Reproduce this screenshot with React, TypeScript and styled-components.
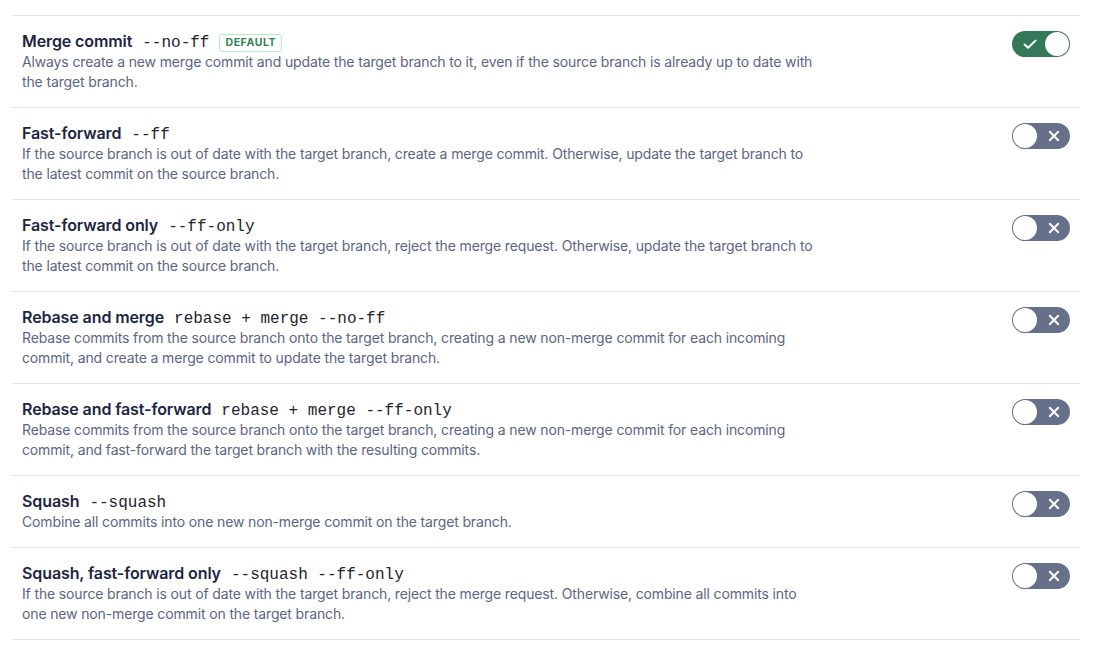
import React from "react";
import styled, { createGlobalStyle } from "styled-components";

const Global = createGlobalStyle`
  html, body { margin: 0; padding: 0; background: #ffffff; }
  body { font-family: Inter, "Noto Sans", "Liberation Sans", sans-serif; -webkit-font-smoothing: antialiased; }
`;

const Page = styled.div`
  padding: 15px 14px 0 12px;
`;

const List = styled.ul`
  list-style: none;
  margin: 0;
  padding: 0;
  border-bottom: 1px solid #e4e4e7;
`;

const Row = styled.li`
  display: flex;
  align-items: flex-start;
  justify-content: space-between;
  border-top: 1px solid #e4e4e7;
  padding: 14px 10px 15px 10px;
`;

const Body = styled.div`
  display: flex;
  flex-direction: column;
`;

const TitleLine = styled.div`
  display: flex;
  align-items: baseline;
  height: 22px;
  line-height: 22px;
  gap: 10px;
`;

const Title = styled.span`
  font-size: 16px;
  font-weight: 600;
  color: #1c2642;
  letter-spacing: -0.1px;
`;

const Code = styled.code`
  font-family: "Liberation Mono", "DejaVu Sans Mono", monospace;
  font-size: 16px;
  color: #22252e;
`;

const Badge = styled.span`
  display: inline-flex;
  align-items: center;
  align-self: flex-start;
  margin-top: 4px;
  height: 16px;
  padding: 0 5px;
  border: 1px solid #b2ecc9;
  border-radius: 3px;
  font-size: 10.5px;
  line-height: 16px;
  font-weight: 700;
  letter-spacing: 0.6px;
  color: #2f8456;
  background: #fff;
`;

const Desc = styled.p`
  margin: 0;
  max-width: 800px;
  font-size: 14px;
  line-height: 20px;
  letter-spacing: -0.14px;
  color: #5b6680;
`;

const Track = styled.button<{ $on: boolean }>`
  position: relative;
  flex: none;
  width: 58px;
  height: 26px;
  margin-top: 1px;
  border: none;
  border-radius: 13px;
  padding: 0;
  background: ${(p) => (p.$on ? "#33795a" : "#67708a")};
  cursor: pointer;
`;

const Knob = styled.span<{ $on: boolean }>`
  position: absolute;
  top: 1px;
  left: ${(p) => (p.$on ? "33px" : "1px")};
  width: 24px;
  height: 24px;
  border-radius: 50%;
  background: #fff;
`;

const Glyph = styled.svg<{ $on: boolean }>`
  position: absolute;
  top: 5px;
  left: ${(p) => (p.$on ? "10px" : "34px")};
  width: 16px;
  height: 16px;
`;

function Toggle({ on }: { on: boolean }) {
  return (
    <Track $on={on} aria-pressed={on}>
      <Glyph $on={on} viewBox="0 0 16 16">
        {on ? (
          <path d="M2.5 8.6l3.6 3.2L13.5 4.6" fill="none" stroke="#fff" strokeWidth="2" strokeLinecap="round" strokeLinejoin="round" />
        ) : (
          <path d="M3.8 3.8l8.4 8.4M12.2 3.8l-8.4 8.4" fill="none" stroke="#fff" strokeWidth="2" strokeLinecap="round" />
        )}
      </Glyph>
      <Knob $on={on} />
    </Track>
  );
}

const items = [
  {
    title: "Merge commit",
    code: "--no-ff",
    badge: true,
    on: true,
    desc: "Always create a new merge commit and update the target branch to it, even if the source branch is already up to date with the target branch.",
  },
  {
    title: "Fast-forward",
    code: "--ff",
    desc: "If the source branch is out of date with the target branch, create a merge commit. Otherwise, update the target branch to the latest commit on the source branch.",
  },
  {
    title: "Fast-forward only",
    code: "--ff-only",
    desc: "If the source branch is out of date with the target branch, reject the merge request. Otherwise, update the target branch to the latest commit on the source branch.",
  },
  {
    title: "Rebase and merge",
    code: "rebase + merge --no-ff",
    desc: "Rebase commits from the source branch onto the target branch, creating a new non-merge commit for each incoming commit, and create a merge commit to update the target branch.",
  },
  {
    title: "Rebase and fast-forward",
    code: "rebase + merge --ff-only",
    desc: "Rebase commits from the source branch onto the target branch, creating a new non-merge commit for each incoming commit, and fast-forward the target branch with the resulting commits.",
  },
  {
    title: "Squash",
    code: "--squash",
    desc: "Combine all commits into one new non-merge commit on the target branch.",
  },
  {
    title: "Squash, fast-forward only",
    code: "--squash --ff-only",
    desc: "If the source branch is out of date with the target branch, reject the merge request. Otherwise, combine all commits into one new non-merge commit on the target branch.",
  },
];

export default function App() {
  return (
    <Page>
      <Global />
      <List>
        {items.map((it) => (
          <Row key={it.title}>
            <Body>
              <TitleLine>
                <Title>{it.title}</Title>
                <Code>{it.code}</Code>
                {it.badge && <Badge>DEFAULT</Badge>}
              </TitleLine>
              <Desc>{it.desc}</Desc>
            </Body>
            <Toggle on={!!it.on} />
          </Row>
        ))}
      </List>
    </Page>
  );
}
